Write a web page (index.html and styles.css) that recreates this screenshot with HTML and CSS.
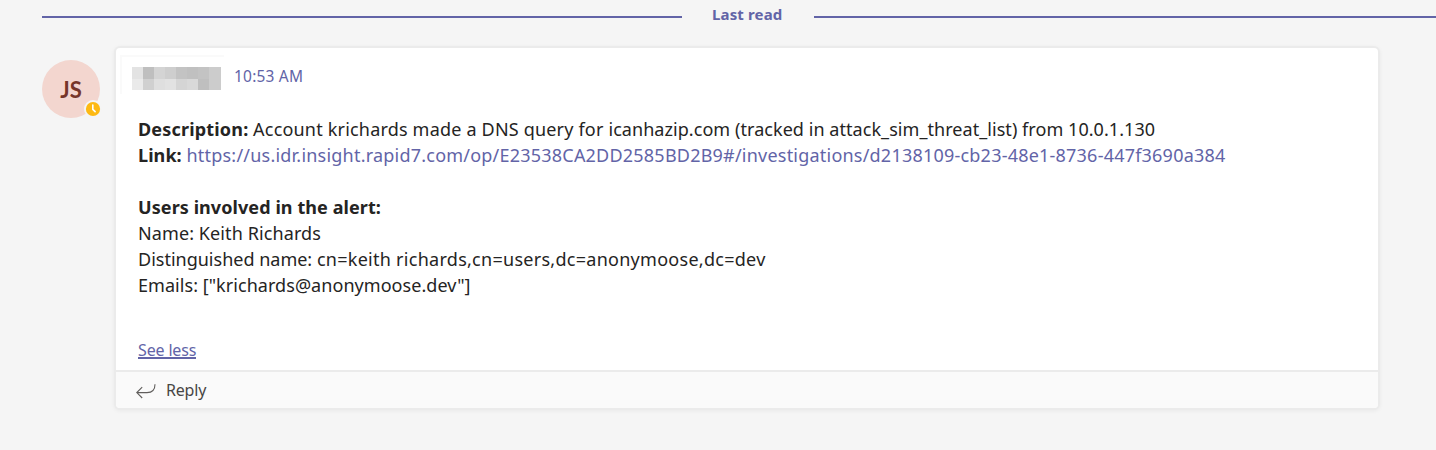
FILE: index.html
```
<!DOCTYPE html>
<html lang="en">
<head>
<meta charset="utf-8">
<title>Channel conversation</title>
<link rel="stylesheet" href="styles.css">
</head>
<body>
<main class="thread">
  <div class="last-read"><span class="rule rule-start"></span><span class="last-read-label">Last read</span><span class="rule rule-end"></span></div>
  <div class="message-row">
    <div class="avatar">JS
      <svg class="presence" viewBox="0 0 18 18"><circle cx="9" cy="9" r="9" fill="#f5f5f5"/><circle cx="9" cy="9" r="7.1" fill="#fdb913"/><path d="M8.8 5v4.3l2.3 2.3" fill="none" stroke="#fff" stroke-width="1.6" stroke-linecap="round"/></svg>
    </div>
    <article class="card">
      <div class="message">
        <header class="meta">
          <svg class="redacted" viewBox="0 0 104 40" shape-rendering="crispEdges">
            <path d="M0 39V0H110" fill="none" stroke="#fafafa" stroke-width="3"/>
            <path fill="#e3e3e3" d="M12 12h11v12H12z"/><path fill="#bfbfbf" d="M23 12h11v12H23z"/><path fill="#d4d4d4" d="M34 12h11v12H34z"/><path fill="#cecece" d="M45 12h11v12H45z"/><path fill="#c3c3c3" d="M56 12h11v12H56z"/><path fill="#c0c0c0" d="M67 12h11v12H67z"/><path fill="#c3c3c3" d="M78 12h11v12H78z"/><path fill="#cccccc" d="M89 12h12v12H89z"/>
            <path fill="#eaeaea" d="M12 24h11v11H12z"/><path fill="#d0d0d0" d="M23 24h11v11H23z"/><path fill="#dfdfdf" d="M34 24h11v11H34z"/><path fill="#e2e2e2" d="M45 24h11v11H45z"/><path fill="#d5d5d5" d="M56 24h11v11H56z"/><path fill="#d9d9d9" d="M67 24h11v11H67z"/><path fill="#bfbfbf" d="M78 24h11v11H78z"/><path fill="#cccccc" d="M89 24h12v11H89z"/>
          </svg>
          <time class="time">10:53 AM</time>
        </header>
        <div class="body">
          <p><b class="desc-label">Description:</b> <span class="desc">Account krichards made a DNS query for <span class="desc-tail">icanhazip.com (tracked in attack_sim_threat_list) from 10.0.1.130</span></span></p>
          <p><b>Link:</b> <a class="link">https://us.idr.insight.rapid7.com/op/E23538CA2DD2585BD2B9#/investigations/d2138109-cb23-48e1-8736-447f3690a384</a></p>
          <p class="users"><b>Users involved in the alert:</b></p>
          <p class="name">Name: Keith Richards</p>
          <p>Distinguished name: <span class="dn">cn=keith richards,cn=users,dc=anonymoose,dc=dev</span></p>
          <p class="emails">Emails: ["krichards@anonymoose.dev"]</p>
        </div>
        <a class="see-less">See less</a>
      </div>
      <footer class="reply">
        <svg class="reply-icon" viewBox="0 0 20 16"><path d="M19 1.2C19 6.5 16.5 9.6 11 9.6H1.2M6.2 4.2L.8 9.6l5.4 5.4" fill="none" stroke="#605e5c" stroke-width="1.1"/></svg>
        <span>Reply</span>
      </footer>
    </article>
  </div>
</main>
</body>
</html>
```

FILE: styles.css
```
* { box-sizing: border-box; }
body { margin: 0; height: 450px; overflow: hidden; background: #f5f5f5; color: #252423; font-family: "Noto Sans", "Open Sans", sans-serif; }
p { margin: 0; white-space: nowrap; }
.thread { padding-left: 42px; }
.last-read { display: flex; align-items: center; height: 34px; color: #6264a7; }
.rule { height: 2px; background: #6264a7; }
.rule-start { width: 640px; }
.rule-end { flex: 1; }
.last-read-label { width: 132px; padding: 0 0 7px 30px; font-size: 15px; font-weight: 700; line-height: 20px; letter-spacing: .15px; white-space: nowrap; }
.message-row { display: flex; align-items: flex-start; gap: 14px; padding-top: 12px; }
.avatar { position: relative; width: 58px; height: 58px; margin-top: 14px; border-radius: 50%; background: #f3d6cf; color: #75352a; font-family: Lato, sans-serif; font-size: 22px; font-weight: 700; line-height: 59px; text-align: center; }
.presence { position: absolute; right: -2px; bottom: 0; width: 18px; height: 18px; }
.card { width: 1266px; margin: 0; border: 2px solid #ebebeb; border-radius: 6px; overflow: hidden; background: #fff; box-shadow: 0 1px 4px rgba(0, 0, 0, .05); }
.message { height: 324px; border-bottom: 2px solid #ebebeb; }
.meta { display: flex; height: 68px; padding: 7px 0 0 4px; }
.redacted { width: 104px; height: 40px; }
.time { margin: 10px 0 0 10px; font-size: 15.5px; line-height: 22px; letter-spacing: .2px; color: #6264a7; }
.body { padding-left: 22px; font-size: 18px; line-height: 26px; }
.body b { letter-spacing: .08px; }
.body .desc-label { letter-spacing: .18px; }
.desc { letter-spacing: .19px; }
.desc-tail { letter-spacing: .055px; }
.link { color: #6264a7; letter-spacing: .217px; }
.users { margin-top: 26px; }
.name { letter-spacing: .1px; }
.dn { letter-spacing: .275px; }
.emails { letter-spacing: .05px; }
.see-less { display: inline-block; margin: 43px 0 0 22px; height: 18px; border-bottom: 2px solid #6264a7; color: #6264a7; font-size: 16px; line-height: 18px; letter-spacing: -.15px; }
.reply { display: flex; align-items: center; height: 36px; padding-left: 20px; gap: 10px; background: #fafafa; color: #484644; font-size: 16px; letter-spacing: -.2px; }
.reply-icon { width: 20px; height: 16px; margin-top: 2px; }
```
